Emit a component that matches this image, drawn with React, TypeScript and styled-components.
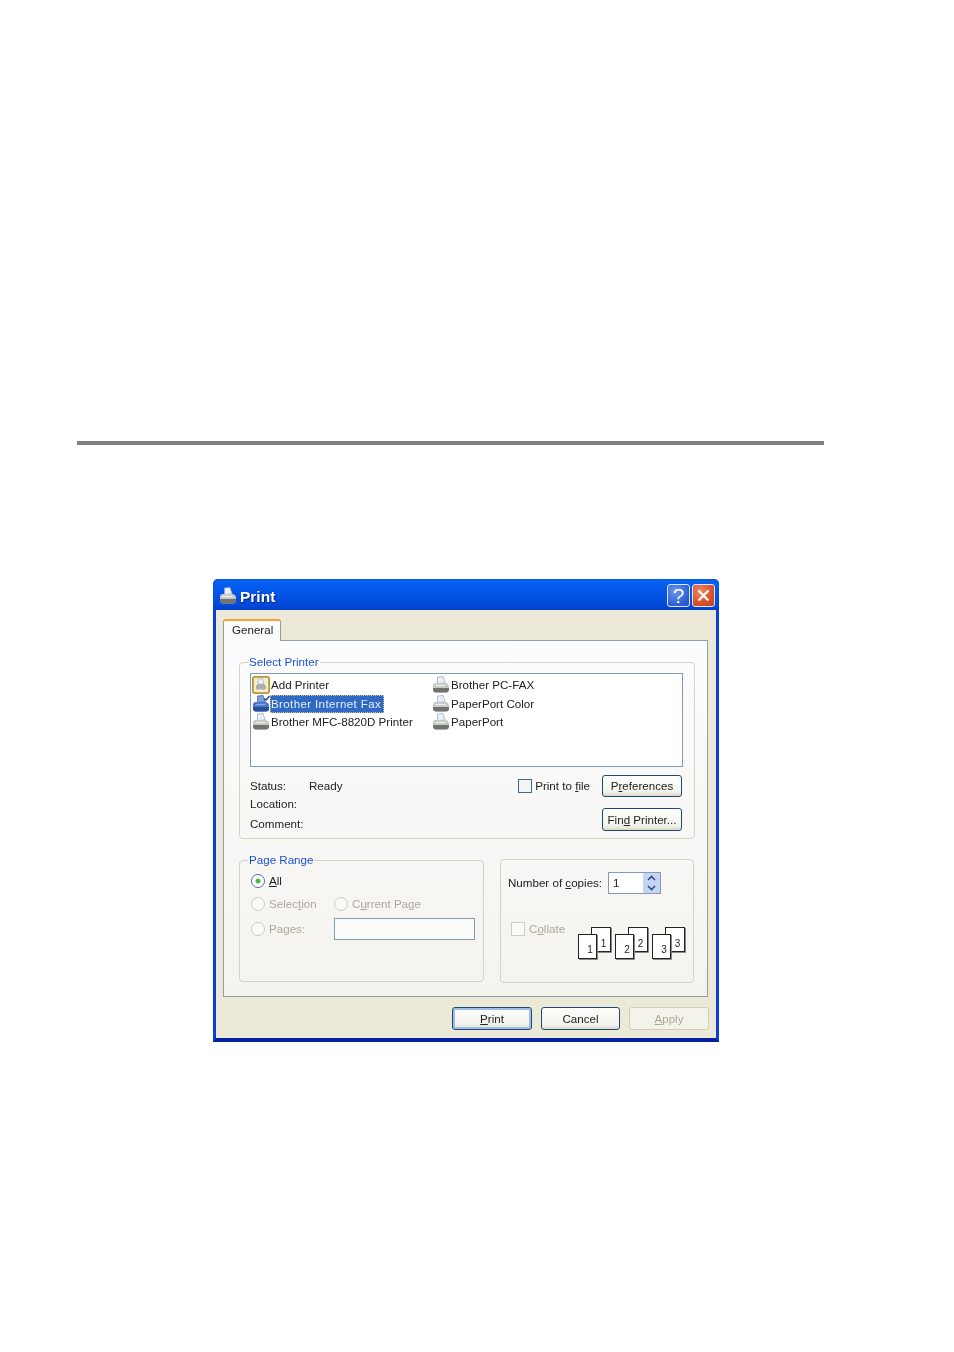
import React from 'react';
import styled, { createGlobalStyle } from 'styled-components';

const GlobalStyle = createGlobalStyle`
  html, body {
    margin: 0;
    background: #fff;
  }
  body {
    font-family: "Liberation Sans", Arial, sans-serif;
  }
`;

const Page = styled.div`
  min-height: 1352px;
  box-sizing: border-box;
  padding: 441px 0 0 77px;
  overflow: hidden;
`;

const Rule = styled.div`
  width: 747px;
  height: 4px;
  background: #808080;
`;

const Dialog = styled.div`
  box-sizing: border-box;
  width: 506px;
  height: 463px;
  margin: 134px 0 0 136px;
  display: flex;
  flex-direction: column;
  background: #ece9d8;
  border: solid #0a3fd8;
  border-width: 0 3px 4px;
  border-bottom-color: #04209c;
  border-radius: 5px 5px 0 0;
  font-size: 11.6px;
  line-height: 14px;
  color: #222;
  filter: blur(0.35px);
`;

const TitleBar = styled.div`
  flex: none;
  box-sizing: border-box;
  height: 31px;
  margin: 0 -3px;
  padding: 2px 4px 0 6px;
  display: flex;
  align-items: center;
  border-radius: 5px 5px 0 0;
  background: linear-gradient(#0a5be0 0, #0461f2 8%, #0355e8 45%, #0148d8 85%, #0240c4 100%);
`;

const TitleText = styled.span`
  margin: 2px 0 0 3px;
  font-size: 15.5px;
  font-weight: 700;
  color: #fff;
  text-shadow: 1px 1px 1px #0f1f7a;
`;

const CaptionButtons = styled.div`
  margin-left: auto;
  display: flex;
  gap: 2px;
`;

const CaptionButton = styled.div<{ $close?: boolean }>`
  box-sizing: border-box;
  width: 23px;
  height: 23px;
  display: flex;
  align-items: center;
  justify-content: center;
  border: 1px solid #dfe8fb;
  border-radius: 3px;
  background: ${(p) =>
    p.$close
      ? 'radial-gradient(circle at 35% 30%, #ee8a62, #d9502c 60%, #c23a18)'
      : 'radial-gradient(circle at 35% 30%, #6f97ef, #2e62d8 65%, #2251c4)'};
  color: #fff;
  font-size: 21px;
`;

const Content = styled.div`
  flex: 1;
  padding: 9px 8px 0 7px;
  display: flex;
  flex-direction: column;
`;

const TabStrip = styled.div`
  display: flex;
  margin-bottom: -1px;
  position: relative;
  z-index: 1;
`;

const Tab = styled.div`
  box-sizing: border-box;
  width: 58px;
  height: 22px;
  padding: 2px 0 0 8px;
  background: #fcfcfe;
  border: 1px solid #919b9c;
  border-top: 2px solid #f2a531;
  border-bottom: 0;
  border-radius: 3px 3px 0 0;
`;

const TabPanel = styled.div`
  box-sizing: border-box;
  height: 357px;
  padding: 14px 0 0 15px;
  border: 1px solid #8f9fa8;
  background: linear-gradient(#fcfcfe, #f4f3ee);
`;

const Group = styled.fieldset<{ $width: number; $height: number; $left: number; $top: number }>`
  box-sizing: border-box;
  width: ${(p) => p.$width}px;
  height: ${(p) => p.$height}px;
  margin: 0;
  min-width: 0;
  padding: ${(p) => p.$top}px 0 0 ${(p) => p.$left}px;
  border: 1px solid #d4d3c4;
  border-radius: 4px;
`;

const GroupTitle = styled.legend<{ $shift: number }>`
  margin-left: ${(p) => p.$shift}px;
  padding: 0 1px;
  color: #1a52d8;
`;

const PrinterList = styled.div`
  box-sizing: border-box;
  width: 433px;
  height: 94px;
  padding: 2px 1px;
  display: grid;
  grid-template-columns: 180px 1fr;
  grid-auto-rows: 18.5px;
  border: 1px solid #7f9db9;
  background: #fff;
`;

const PrinterRow = styled.div`
  display: flex;
  align-items: center;
`;

const PrinterName = styled.span<{ $selected?: boolean }>`
  padding: 2px 1px;
  white-space: nowrap;
  ${(p) =>
    p.$selected &&
    `
    width: 112px;
    letter-spacing: 0.35px;
    background: #316ac5;
    color: #e8eefa;
    outline: 1px dotted #e0c070;
    outline-offset: -1px;
  `}
`;

const InfoRow = styled.div`
  width: 433px;
  display: flex;
  justify-content: space-between;
`;

const InfoGrid = styled.div`
  margin-top: 12px;
  display: grid;
  grid-template-columns: 59px auto;
  grid-template-rows: 18px 20px 14px;
  align-content: start;
`;

const PrinterActions = styled.div`
  margin: 8px 1px 0 0;
  display: flex;
  flex-direction: column;
  align-items: flex-end;
  gap: 11px;
`;

const InlineRow = styled.div<{ $gap: number; $end?: boolean }>`
  display: flex;
  align-items: center;
  gap: ${(p) => p.$gap}px;
  align-self: ${(p) => (p.$end ? 'end' : 'auto')};
`;

const Button = styled.div<{ $default?: boolean; $disabled?: boolean }>`
  box-sizing: border-box;
  width: 80px;
  height: 23px;
  display: flex;
  align-items: center;
  justify-content: center;
  border: 1px solid ${(p) => (p.$disabled ? '#cfcdbd' : '#1c4a74')};
  border-radius: 3px;
  white-space: nowrap;
  color: ${(p) => (p.$disabled ? '#aca899' : '#222')};
  background: ${(p) => (p.$disabled ? '#f4f3ea' : 'linear-gradient(#fff, #f3f2ea 80%, #dcd8c8)')};
  box-shadow: ${(p) => (p.$default ? 'inset 0 0 0 2px #9fbdea' : 'none')};
`;

const PreferencesButton = styled(Button)`
  height: 22px;
`;

const CancelButton = styled(Button)`
  width: 79px;
`;

const Checkbox = styled.span<{ $disabled?: boolean }>`
  flex: none;
  box-sizing: border-box;
  width: 14px;
  height: 14px;
  border: 1px solid ${(p) => (p.$disabled ? '#cfcdbd' : '#3a6a98')};
  background: ${(p) => (p.$disabled ? '#fafaf6' : '#f6f6f0')};
`;

const Radio = styled.span<{ $on?: boolean; $disabled?: boolean }>`
  flex: none;
  box-sizing: border-box;
  width: 14px;
  height: 14px;
  border-radius: 50%;
  border: 1.5px solid ${(p) => (p.$disabled ? '#cfcdbd' : '#4d7397')};
  background: ${(p) =>
    p.$on ? 'radial-gradient(circle, #35b335 0, #52c552 26%, #fff 34%)' : p.$disabled ? '#fafaf6' : '#fff'};
`;

const Label = styled.span<{ $disabled?: boolean }>`
  white-space: nowrap;
  color: ${(p) => (p.$disabled ? '#aca899' : 'inherit')};
`;

const GroupsRow = styled.div`
  margin-top: 14px;
  display: flex;
  align-items: flex-start;
`;

const RangeGrid = styled.div`
  display: grid;
  grid-template-columns: 83px 141px;
  grid-template-rows: 14px 16px 22px;
  row-gap: 7px;
  align-items: center;
`;

const RangeInput = styled.div`
  box-sizing: border-box;
  width: 141px;
  height: 22px;
  border: 1px solid #7f9db9;
  background: #fbfbf9;
`;

const CopiesBox = styled.div`
  box-sizing: border-box;
  width: 194px;
  height: 124px;
  margin: 6px 0 0 16px;
  padding: 12px 7px 0 7px;
  border: 1px solid #d4d3c4;
  border-radius: 4px;
`;

const CopiesLabel = styled(Label)`
  width: 94px;
`;

const CopiesInput = styled.div`
  box-sizing: border-box;
  width: 53px;
  height: 22px;
  padding-left: 4px;
  display: flex;
  align-items: center;
  justify-content: space-between;
  border: 1px solid #7f9db9;
  background: #fff;
`;

const Spinner = styled.div`
  width: 17px;
  height: 20px;
  display: flex;
  flex-direction: column;
  align-items: center;
  justify-content: space-around;
  background: #c4d3f6;
`;

const CollateRow = styled.div`
  margin: 28px 0 0 3px;
  display: flex;
  align-items: flex-start;
`;

const CollateIcon = styled.svg`
  margin: 5px 0 0 auto;
  flex: none;
`;

const Footer = styled.div`
  margin: 10px -1px 0 0;
  display: flex;
  justify-content: flex-end;
  gap: 9px;
`;

const Mnemonic = styled.u`
  text-underline-offset: 1px;
`;

const PrinterIcon = ({ blue = false }: { blue?: boolean }) => {
  const body = blue ? '#4a78c8' : '#c6c9c6';
  const dark = blue ? '#2a4f9a' : '#70736e';
  return (
    <svg width="18" height="18" viewBox="0 0 18 18">
      <path d="M5.5 1 L11 .5 L13.2 7 L5.5 7.5 Z" fill={blue ? '#7ea2e0' : '#e9f0fa'} stroke={blue ? '#2e5aa8' : '#93a3ba'} strokeWidth=".7" />
      <path d="M1 9.5 Q1 7 3.5 7 H13 Q16 7 17 10 V13 Q17 16.5 14 16.5 H4 Q1 16.5 1 13 Z" fill={body} />
      <path d="M1 12 H17 V13 Q17 16.5 14 16.5 H4 Q1 16.5 1 13 Z" fill={dark} />
      <path d="M3.5 9.5 L13.5 9.5" stroke={blue ? '#8fb0e6' : '#f0f2ee'} strokeWidth="1.2" />
      {blue && <path d="M12 3.5 L14 5 L17.5 1" fill="none" stroke="#1d3f86" strokeWidth="1.4" />}
    </svg>
  );
};

const AddPrinterIcon = () => (
  <svg width="18" height="18" viewBox="0 0 18 18">
    <rect x=".9" y=".9" width="16.2" height="16.2" rx="2" fill="#f7edc8" stroke="#b5963a" strokeWidth="1.8" />
    <path d="M6 3 L10.5 2.6 L12 8 L6 8 Z" fill="#eef3fa" stroke="#93a3ba" strokeWidth=".6" />
    <path d="M4 9.5 L6 8 L12 8 L14 10 L14 13.5 L4 13.5 Z" fill="#a9aeb0" />
  </svg>
);

const SheetPair = ({ x, n }: { x: number; n: number }) => (
  <g transform={`translate(${x} 0)`}>
    <rect x="13.5" y=".5" width="19" height="24" fill="#fff" stroke="#222" />
    <path d="M14 25.5 H33.5 V1" fill="none" stroke="#888" />
    <text x="25.5" y="20" fontSize="10" fill="#222" textAnchor="middle" fontFamily="Liberation Sans">{n}</text>
    <rect x=".5" y="7.5" width="18" height="24" fill="#fff" stroke="#222" />
    <path d="M1 32.5 H19.5 V8" fill="none" stroke="#888" />
    <text x="12" y="26" fontSize="10" fill="#222" textAnchor="middle" fontFamily="Liberation Sans">{n}</text>
  </g>
);

const printers = [
  { name: 'Add Printer', icon: 'add' },
  { name: 'Brother PC-FAX', icon: 'printer' },
  { name: 'Brother Internet Fax', icon: 'selected' },
  { name: 'PaperPort Color', icon: 'printer' },
  { name: 'Brother MFC-8820D Printer', icon: 'printer' },
  { name: 'PaperPort', icon: 'printer' },
];

export default function App() {
  return (
    <Page>
      <GlobalStyle />
      <Rule />
      <Dialog>
        <TitleBar>
          <PrinterIcon />
          <TitleText>Print</TitleText>
          <CaptionButtons>
            <CaptionButton>?</CaptionButton>
            <CaptionButton $close>
              <svg width="13" height="13" viewBox="0 0 13 13">
                <path d="M1.5 1.5 L11.5 11.5 M11.5 1.5 L1.5 11.5" stroke="#fff" strokeWidth="2.2" />
              </svg>
            </CaptionButton>
          </CaptionButtons>
        </TitleBar>
        <Content>
          <TabStrip>
            <Tab>General</Tab>
          </TabStrip>
          <TabPanel>
            <Group $width={456} $height={184} $left={10} $top={4}>
              <GroupTitle $shift={-2}>Select Printer</GroupTitle>
              <PrinterList>
                {printers.map((p) => (
                  <PrinterRow key={p.name}>
                    {p.icon === 'add' ? <AddPrinterIcon /> : <PrinterIcon blue={p.icon === 'selected'} />}
                    <PrinterName $selected={p.icon === 'selected'}>{p.name}</PrinterName>
                  </PrinterRow>
                ))}
              </PrinterList>
              <InfoRow>
                <InfoGrid>
                  <span>Status:</span>
                  <span>Ready</span>
                  <span>Location:</span>
                  <span />
                  <span>Comment:</span>
                  <span />
                </InfoGrid>
                <PrinterActions>
                  <InlineRow $gap={12}>
                    <InlineRow $gap={3}>
                      <Checkbox />
                      <Label>Print to <Mnemonic>f</Mnemonic>ile</Label>
                    </InlineRow>
                    <PreferencesButton><Label>P<Mnemonic>r</Mnemonic>eferences</Label></PreferencesButton>
                  </InlineRow>
                  <Button><Label>Fin<Mnemonic>d</Mnemonic> Printer...</Label></Button>
                </PrinterActions>
              </InfoRow>
            </Group>
            <GroupsRow>
              <Group $width={245} $height={129} $left={11} $top={7}>
                <GroupTitle $shift={-3}>Page Range</GroupTitle>
                <RangeGrid>
                  <InlineRow $gap={4}>
                    <Radio $on />
                    <Label><Mnemonic>A</Mnemonic>ll</Label>
                  </InlineRow>
                  <span />
                  <InlineRow $gap={4} $end>
                    <Radio $disabled />
                    <Label $disabled>Selec<Mnemonic>t</Mnemonic>ion</Label>
                  </InlineRow>
                  <InlineRow $gap={4} $end>
                    <Radio $disabled />
                    <Label $disabled>C<Mnemonic>u</Mnemonic>rrent Page</Label>
                  </InlineRow>
                  <InlineRow $gap={4}>
                    <Radio $disabled />
                    <Label $disabled>Pa<Mnemonic>g</Mnemonic>es:</Label>
                  </InlineRow>
                  <RangeInput />
                </RangeGrid>
              </Group>
              <CopiesBox>
                <InlineRow $gap={6}>
                  <CopiesLabel>Number of <Mnemonic>c</Mnemonic>opies:</CopiesLabel>
                  <CopiesInput>
                    1
                    <Spinner>
                      <svg width="9" height="6" viewBox="0 0 9 6">
                        <path d="M1 5 L4.5 1.5 L8 5" fill="none" stroke="#34507a" strokeWidth="1.6" />
                      </svg>
                      <svg width="9" height="6" viewBox="0 0 9 6">
                        <path d="M1 1 L4.5 4.5 L8 1" fill="none" stroke="#34507a" strokeWidth="1.6" />
                      </svg>
                    </Spinner>
                  </CopiesInput>
                </InlineRow>
                <CollateRow>
                  <InlineRow $gap={4}>
                    <Checkbox $disabled />
                    <Label $disabled>C<Mnemonic>o</Mnemonic>llate</Label>
                  </InlineRow>
                  <CollateIcon width="108" height="34" viewBox="0 0 108 34">
                    <SheetPair x={0} n={1} />
                    <SheetPair x={37} n={2} />
                    <SheetPair x={74} n={3} />
                  </CollateIcon>
                </CollateRow>
              </CopiesBox>
            </GroupsRow>
          </TabPanel>
          <Footer>
            <Button $default><Label><Mnemonic>P</Mnemonic>rint</Label></Button>
            <CancelButton>Cancel</CancelButton>
            <Button $disabled><Label><Mnemonic>A</Mnemonic>pply</Label></Button>
          </Footer>
        </Content>
      </Dialog>
    </Page>
  );
}
